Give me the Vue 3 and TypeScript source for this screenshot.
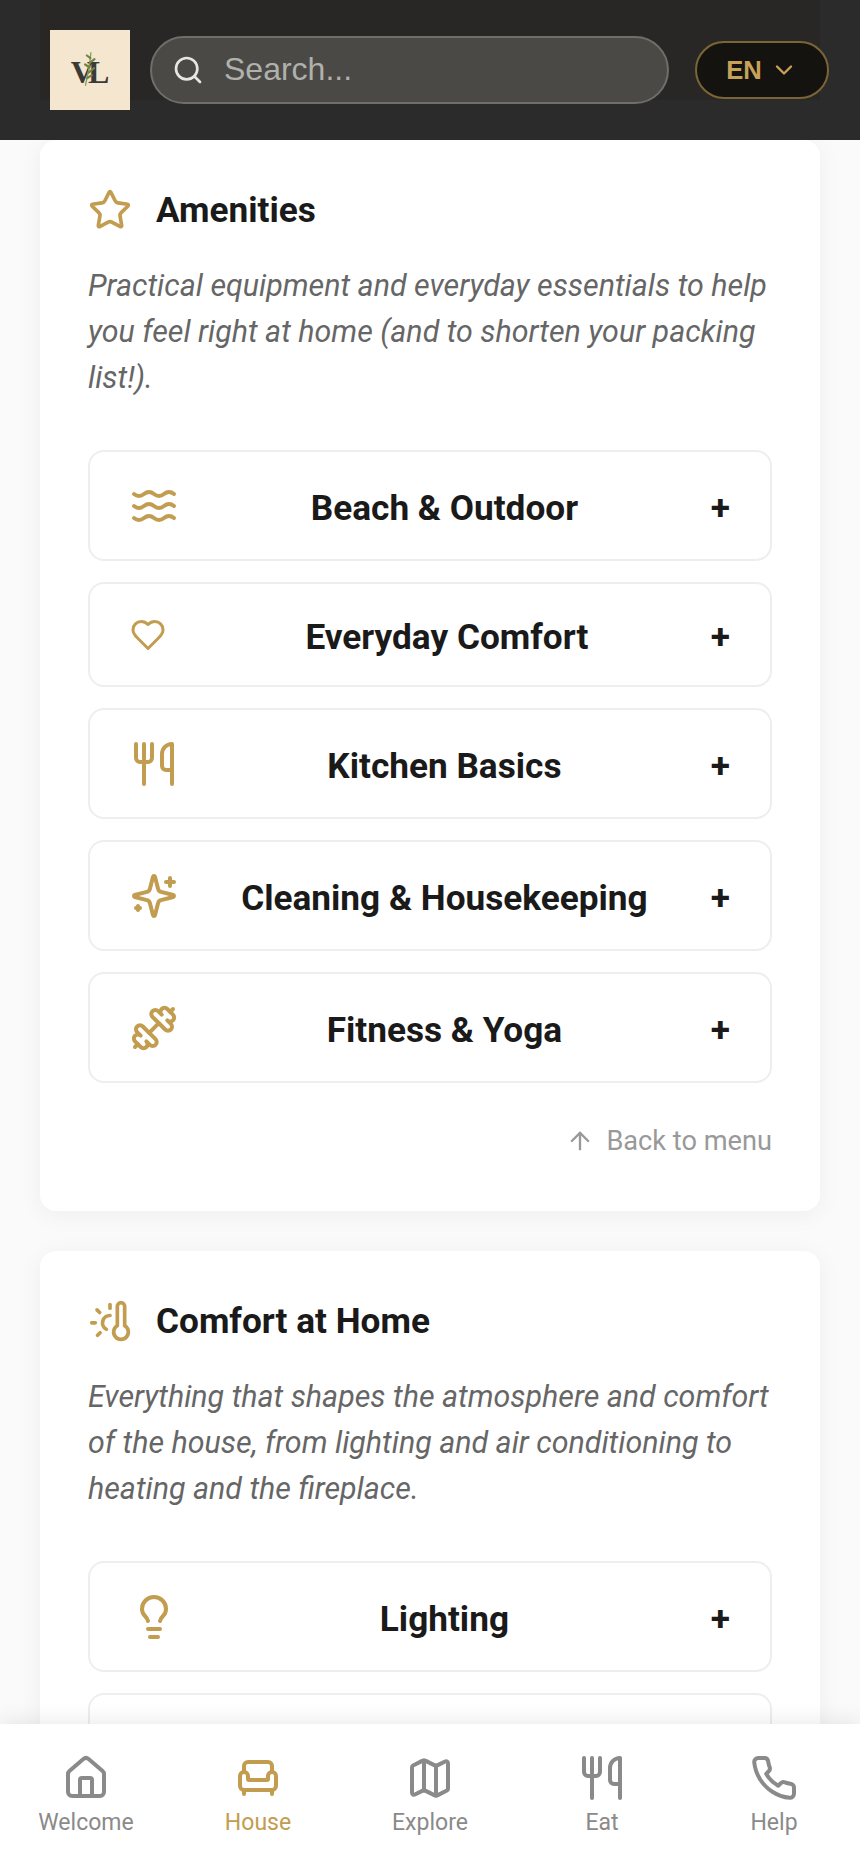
<template>
  <div class="page">
    <header class="topbar">
      <div class="logo">
        <span class="logo-mark">VL</span>
        <svg class="sprig" viewBox="0 0 20 40" fill="none">
          <path d="M11 2C10 14 8 26 5 38" stroke="#8c9a5b" stroke-width="1.5" />
          <path d="M10.500 8l-4-3M10 13l5-4M9.500 18l-5-3M8.500 24l6-5M7 30l5-3" stroke="#6f8547" stroke-width="2.400" stroke-linecap="round" />
        </svg>
      </div>
      <div class="search">
        <svg class="search-icon" viewBox="0 0 24 24">
          <path v-for="d in icons.search" :key="d" :d="d" />
        </svg>
        <span class="search-text">Search...</span>
      </div>
      <button class="lang">
        <span>EN</span>
        <svg viewBox="0 0 24 24"><path d="m6 9 6 6 6-6" /></svg>
      </button>
    </header>

    <main class="content">
      <section v-for="section in sections" :key="section.title" class="card">
        <div class="card-title">
          <svg class="title-icon" viewBox="0 0 24 24">
            <path v-for="d in icons[section.icon]" :key="d" :d="d" />
          </svg>
          <h2>{{ section.title }}</h2>
        </div>
        <p class="card-desc">{{ section.desc }}</p>
        <div class="rows">
          <div v-for="row in section.rows" :key="row.label" class="row">
            <svg class="row-icon" :class="{ small: row.small, flip: row.flip }" viewBox="0 0 24 24">
              <path v-for="d in icons[row.icon]" :key="d" :d="d" />
            </svg>
            <span class="row-label">{{ row.label }}</span>
            <span class="row-plus">+</span>
          </div>
          <!-- next row only peeks out above the bottom nav -->
          <div v-if="section.more" class="row row-more"></div>
        </div>
        <a v-if="section.back" class="back">
          <svg viewBox="0 0 24 24"><path d="m5 12 7-7 7 7" /><path d="M12 19V5" /></svg>
          Back to menu
        </a>
      </section>
    </main>

    <nav class="tabs">
      <div v-for="tab in tabs" :key="tab.label" class="tab" :class="{ active: tab.label === 'House' }">
        <svg viewBox="0 0 24 24">
          <path v-for="d in icons[tab.icon]" :key="d" :d="d" />
        </svg>
        <span>{{ tab.label }}</span>
      </div>
    </nav>
  </div>
</template>

<script setup lang="ts">
interface Row {
  label: string;
  icon: string;
  small?: boolean;
  flip?: boolean;
}

interface Section {
  title: string;
  icon: string;
  desc: string;
  rows: Row[];
  back?: boolean;
  more?: boolean;
}

const icons: Record<string, string[]> = {
  search: ['M19 11a8 8 0 1 1-16 0 8 8 0 0 1 16 0Z', 'm21 21-4.3-4.3'],
  star: ['M11.525 2.295a.53.53 0 0 1 .95 0l2.31 4.679a2.123 2.123 0 0 0 1.595 1.16l5.166.756a.53.53 0 0 1 .294.904l-3.736 3.638a2.123 2.123 0 0 0-.611 1.878l.882 5.14a.53.53 0 0 1-.771.56l-4.618-2.428a2.122 2.122 0 0 0-1.973 0L6.396 21.01a.53.53 0 0 1-.77-.56l.881-5.139a2.122 2.122 0 0 0-.611-1.879L2.16 9.795a.53.53 0 0 1 .294-.906l5.165-.755a2.122 2.122 0 0 0 1.597-1.16z'],
  waves: [
    'M2 6c.6.5 1.2 1 2.500 1C7 7 7 5 9.500 5c2.600 0 2.400 2 5 2 2.500 0 2.500-2 5-2 1.300 0 1.900.5 2.500 1',
    'M2 12c.6.5 1.200 1 2.500 1 2.500 0 2.500-2 5-2 2.600 0 2.400 2 5 2 2.500 0 2.500-2 5-2 1.300 0 1.900.5 2.500 1',
    'M2 18c.6.5 1.200 1 2.500 1 2.500 0 2.500-2 5-2 2.600 0 2.400 2 5 2 2.500 0 2.500-2 5-2 1.300 0 1.900.5 2.500 1',
  ],
  heart: ['M19 14c1.490-1.460 3-3.210 3-5.500A5.500 5.500 0 0 0 16.500 3c-1.760 0-3 .5-4.500 2-1.500-1.500-2.740-2-4.500-2A5.500 5.500 0 0 0 2 8.500c0 2.300 1.500 4.050 3 5.500l7 7Z'],
  utensils: ['M3 2v7c0 1.100.9 2 2 2h4a2 2 0 0 0 2-2V2', 'M7 2v20', 'M21 15V2a5 5 0 0 0-5 5v6c0 1.100.9 2 2 2h3Zm0 0v7'],
  sparkles: [
    'M9.937 15.500A2 2 0 0 0 8.500 14.063l-6.135-1.582a.5.5 0 0 1 0-.962L8.500 9.936A2 2 0 0 0 9.937 8.500l1.582-6.135a.5.5 0 0 1 .963 0L14.063 8.500A2 2 0 0 0 15.500 9.937l6.135 1.581a.5.5 0 0 1 0 .964L15.500 14.063a2 2 0 0 0-1.437 1.437l-1.582 6.135a.5.5 0 0 1-.963 0z',
    'M20 3v4',
    'M22 5h-4',
    'M4 17v2',
    'M5 18H3',
  ],
  dumbbell: [
    'M14.400 14.400 9.600 9.600',
    'M18.657 21.485a2 2 0 1 1-2.829-2.828l-1.767 1.768a2 2 0 1 1-2.829-2.829l6.364-6.364a2 2 0 1 1 2.829 2.829l-1.768 1.767a2 2 0 1 1 2.828 2.829z',
    'm21.500 21.500-1.400-1.400',
    'M3.900 3.900 2.500 2.500',
    'M6.404 12.768a2 2 0 1 1-2.829-2.829l1.768-1.767a2 2 0 1 1-2.828-2.829l2.828-2.828a2 2 0 1 1 2.829 2.828l1.767-1.768a2 2 0 1 1 2.829 2.829z',
  ],
  thermoSun: [
    'M12 9a4 4 0 0 0-2 7.500',
    'M12 3v2',
    'm6.600 18.400-1.400 1.400',
    'M20 4v10.540a4 4 0 1 1-4 0V4a2 2 0 0 1 4 0Z',
    'M4 13H2',
    'M6.340 7.340 4.930 5.930',
  ],
  bulb: [
    'M15 14c.2-1 .7-1.700 1.500-2.500 1-.9 1.500-2.200 1.500-3.500A6 6 0 0 0 6 8c0 1 .2 2.200 1.500 3.500.7.7 1.300 1.500 1.500 2.500',
    'M9 18h6',
    'M10 22h4',
  ],
  house: [
    'M15 21v-8a1 1 0 0 0-1-1h-4a1 1 0 0 0-1 1v8',
    'M3 10a2 2 0 0 1 .709-1.528l7-5.999a2 2 0 0 1 2.582 0l7 5.999A2 2 0 0 1 21 10v9a2 2 0 0 1-2 2H5a2 2 0 0 1-2-2z',
  ],
  armchair: [
    'M19 9V6a2 2 0 0 0-2-2H7a2 2 0 0 0-2 2v3',
    'M3 16a2 2 0 0 0 2 2h14a2 2 0 0 0 2-2v-5a2 2 0 0 0-4 0v1.500a.5.5 0 0 1-.5.5h-9a.5.5 0 0 1-.5-.5V11a2 2 0 0 0-4 0z',
    'M5 18v2',
    'M19 18v2',
  ],
  map: [
    'M14.106 5.553a2 2 0 0 0 1.788 0l3.659-1.830A1 1 0 0 1 21 4.619v12.764a1 1 0 0 1-.553.894l-4.553 2.277a2 2 0 0 1-1.788 0l-4.212-2.106a2 2 0 0 0-1.788 0l-3.659 1.830A1 1 0 0 1 3 19.381V6.618a1 1 0 0 1 .553-.894l4.553-2.277a2 2 0 0 1 1.788 0z',
    'M15 5.764v15',
    'M9 3.236v15',
  ],
  phone: ['M22 16.920v3a2 2 0 0 1-2.180 2 19.790 19.790 0 0 1-8.630-3.070 19.500 19.500 0 0 1-6-6 19.790 19.790 0 0 1-3.070-8.670A2 2 0 0 1 4.110 2h3a2 2 0 0 1 2 1.720 12.840 12.840 0 0 0 .7 2.810 2 2 0 0 1-.45 2.110L8.090 9.910a16 16 0 0 0 6 6l1.270-1.270a2 2 0 0 1 2.110-.45 12.840 12.840 0 0 0 2.810.7A2 2 0 0 1 22 16.920z'],
};

const sections: Section[] = [
  {
    title: 'Amenities',
    icon: 'star',
    desc: 'Practical equipment and everyday essentials to help you feel right at home (and to shorten your packing list!).',
    back: true,
    rows: [
      { label: 'Beach & Outdoor', icon: 'waves' },
      { label: 'Everyday Comfort', icon: 'heart', small: true },
      { label: 'Kitchen Basics', icon: 'utensils' },
      { label: 'Cleaning & Housekeeping', icon: 'sparkles' },
      { label: 'Fitness & Yoga', icon: 'dumbbell', flip: true },
    ],
  },
  {
    title: 'Comfort at Home',
    icon: 'thermoSun',
    desc: 'Everything that shapes the atmosphere and comfort of the house, from lighting and air conditioning to heating and the fireplace.',
    more: true,
    rows: [{ label: 'Lighting', icon: 'bulb' }],
  },
];

const tabs = [
  { label: 'Welcome', icon: 'house' },
  { label: 'House', icon: 'armchair' },
  { label: 'Explore', icon: 'map' },
  { label: 'Eat', icon: 'utensils' },
  { label: 'Help', icon: 'phone' },
];
</script>

<style scoped>
.page {
  display: flex;
  flex-direction: column;
  height: 1870px;
  overflow: hidden;
  background: #fafafa;
  font-family: Roboto, "Liberation Sans", sans-serif;
  color: #1a1a1a;
}

svg {
  display: block;
  flex-shrink: 0;
  fill: none;
  stroke: currentColor;
  stroke-width: 2;
  stroke-linecap: round;
  stroke-linejoin: round;
}

/* top bar */
.topbar {
  display: flex;
  align-items: center;
  flex-shrink: 0;
  height: 140px;
  padding: 0 31px 0 50px;
  box-sizing: border-box;
  background: linear-gradient(#282725, #282725) center top / 780px 100px no-repeat, #2b2b2b;
}

.logo {
  position: relative;
  display: flex;
  align-items: center;
  justify-content: center;
  flex-shrink: 0;
  width: 80px;
  height: 80px;
  background: #f5e6cf;
}

.logo-mark {
  margin-top: 4px;
  padding-right: 6px;
  font-family: "Liberation Serif", serif;
  font-size: 32px;
  font-weight: 700;
  line-height: 32px;
  letter-spacing: -6px;
  color: #3b3a37;
}

.sprig {
  position: absolute;
  left: 31px;
  top: 21px;
  width: 18px;
  height: 36px;
  stroke: none;
}

.search {
  display: flex;
  align-items: center;
  flex-shrink: 0;
  width: 519px;
  height: 68px;
  margin-left: 20px;
  padding-left: 20px;
  box-sizing: border-box;
  border: 2px solid #6f6e6a;
  border-radius: 34px;
  background: #4a4945;
  color: #e6e6e2;
}

.search-icon {
  width: 32px;
  height: 32px;
}

.search-text {
  margin-left: 20px;
  margin-top: -2px;
  font-family: "Liberation Sans", Arial, sans-serif;
  font-size: 32px;
  color: #b0b0ac;
}

.lang {
  display: flex;
  align-items: center;
  justify-content: center;
  gap: 8px;
  width: 135px;
  height: 58px;
  margin-left: 26px;
  border: 2px solid #7b6534;
  border-radius: 29px;
  background: #15130f;
  color: #c9a25a;
  font-family: "Liberation Sans", Arial, sans-serif;
  font-size: 25.6px;
  font-weight: 700;
}

.lang svg {
  width: 28px;
  height: 28px;
}

/* sections */
.content {
  flex: 1;
  min-height: 0;
  overflow: hidden;
  padding: 0 40px;
}

.card {
  margin-bottom: 40px;
  padding: 48px 48px 52px;
  border-radius: 16px;
  background: #fff;
  box-shadow: 0 4px 24px rgba(0, 0, 0, 0.05);
}

.card-title {
  display: flex;
  align-items: center;
  gap: 24px;
  height: 44px;
}

.card-title h2 {
  margin: 0;
  font-size: 35.2px;
  font-weight: 700;
  line-height: 44px;
}

.title-icon {
  width: 44px;
  height: 44px;
  color: #c29d50;
}

.card-desc {
  margin: 31px 0 49px;
  font-size: 30.4px;
  font-style: italic;
  line-height: 46px;
  color: #666;
}

.rows {
  display: flex;
  flex-direction: column;
  gap: 21px;
}

.row {
  display: flex;
  align-items: center;
  padding: 29.5px 40px;
  border: 2px solid #eee;
  border-radius: 16px;
  background: #fff;
}

.row-more {
  height: 48px;
}

.row-icon {
  width: 48px;
  height: 48px;
  color: #c29d50;
}

.row-icon.small {
  width: 36px;
  height: 36px;
  margin-right: 17px;
}

.row-icon.flip {
  transform: scaleX(-1);
}

.row-label {
  flex: 1;
  padding-top: 4px;
  font-size: 35.2px;
  font-weight: 700;
  line-height: 38px;
  text-align: center;
}

.row-plus {
  padding-top: 4px;
  font-size: 35.2px;
  font-weight: 700;
  line-height: 38px;
}

.back {
  display: flex;
  align-items: center;
  justify-content: flex-end;
  gap: 12px;
  margin-top: 40px;
  font-size: 27.2px;
  line-height: 36px;
  color: #999;
}

.back svg {
  width: 28px;
  height: 28px;
}

/* bottom nav */
.tabs {
  position: relative;
  display: grid;
  grid-template-columns: repeat(5, 1fr);
  flex-shrink: 0;
  height: 146px;
  padding-top: 30px;
  box-sizing: border-box;
  background: #fff;
  box-shadow: 0 -4px 20px rgba(0, 0, 0, 0.08);
}

.tab {
  display: flex;
  flex-direction: column;
  align-items: center;
  gap: 6px;
  font-size: 23px;
  line-height: 30px;
  color: #8a8a8a;
}

.tab svg {
  width: 48px;
  height: 48px;
}

.tab.active {
  color: #c29d50;
}
</style>

<style>
body {
  background: #fafafa;
}
</style>
